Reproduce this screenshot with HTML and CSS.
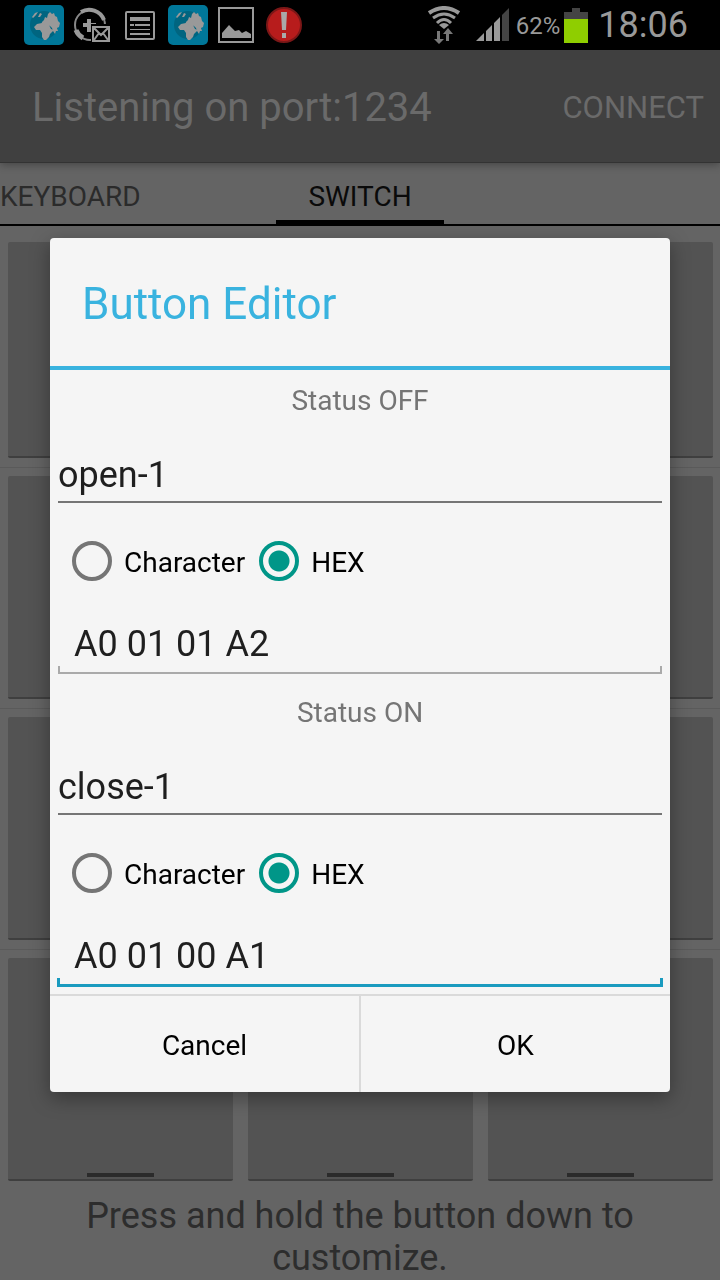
FILE: index.html
```
<!DOCTYPE html>
<html lang="en">
<head>
    <meta charset="UTF-8">
    <meta name="viewport" content="width=device-width, initial-scale=1">
    <title>Button Editor</title>
    <link rel="stylesheet" href="styles.css">
</head>
<body>
    <svg class="sprite" aria-hidden="true">
        <symbol id="globe" viewBox="0 0 40 40">
            <rect width="40" height="40" rx="5" fill="#007799"></rect>
            <circle cx="20" cy="20" r="14" fill="#006580"></circle>
            <path fill="#999" d="M8 12l3-4 3-1-2 3-3 3zM14 12l2-4 2 1-2 3z"></path>
            <path fill="#999" d="M18 17l2-2 1-3 2 1 1-4 2-2 2 2 2-1 1 3 2 1 1 4 2 2-1 4-2 1 1 3-2 0-1 3-2-3-1-3-2-2-3-1-2 1-2-1-2 1z"></path>
            <path fill="#999" d="M10 22l3-3 5-1 3 2 4 0 2 4 3 1-4 4-1 3-3 3-2 0-2-3 0-4-2-3-4 0z"></path>
        </symbol>
    </svg>

    <div class="status-bar">
        <div class="status-bar__icons">
            <svg width="40" height="40"><use href="#globe"></use></svg>
            <svg width="40" height="40" viewBox="0 0 40 40">
                <circle cx="18" cy="20" r="15" fill="none" stroke="#888" stroke-width="2"></circle>
                <path d="M4 25A15 15 0 0 0 11 33" fill="none" stroke="#999" stroke-width="5"></path>
                <path d="M9 7A16 16 0 0 1 32 15" fill="none" stroke="#999" stroke-width="4"></path>
                <path d="M17 14v13M11 20h13" stroke="#999" stroke-width="4"></path>
                <path d="M19 19h20v19H19z" fill="#000"></path>
                <path d="M21 22h16v14H21zM22 23l7 7 7-7M22 35l5-7M36 35l-5-7" fill="#000" stroke="#999" stroke-width="2"></path>
            </svg>
            <svg width="40" height="40" viewBox="0 0 40 40">
                <rect x="6" y="7" width="28" height="27" rx="1" fill="none" stroke="#999" stroke-width="2"></rect>
                <path d="M10 12h20v4H10zM10 19h4v2h-4zM15 19h15v2H15zM10 24h20v1H10zM10 28h20v2H10z" fill="#999"></path>
            </svg>
            <svg width="40" height="40"><use href="#globe"></use></svg>
            <svg width="40" height="40" viewBox="0 0 40 40">
                <path d="M3 3h34v34H3z" fill="none" stroke="#999" stroke-width="2"></path>
                <path d="M6 33v-5l7-8 6 6 4-1 3 3 4-2 5 3v4z" fill="#999"></path>
            </svg>
            <svg width="40" height="40" viewBox="0 0 40 40">
                <circle cx="20" cy="20" r="17" fill="#b71c1c" stroke="#7c1717" stroke-width="2"></circle>
                <path d="M17 7h6l-1 18h-4zM18 28h4v5h-4z" fill="#aaa"></path>
            </svg>
        </div>
        <div class="status-bar__info">
            <svg width="36" height="38" viewBox="0 0 36 38">
                <g fill="none" stroke="#999">
                    <path d="M3 7Q18-3 33 7" stroke-width="4"></path>
                    <path d="M7 12Q18 4 29 12" stroke-width="3"></path>
                    <path d="M11 17Q18 10 25 17" stroke-width="3"></path>
                </g>
                <path d="M13 19q5-4 10 0l-5 4z" fill="#999"></path>
                <path d="M11 25h3v8h4l-5 5-5-5h3zM20 35v-7h-3l5-6 5 6h-4v7z" fill="#777"></path>
            </svg>
            <svg class="signal" width="34" height="34" viewBox="0 0 34 34">
                <path d="M0 33l8-8v8zM10 23l6-6v16h-6zM18 15l6-6v24h-6z" fill="#999"></path>
                <path d="M26 7l7-7v33h-7z" fill="#444"></path>
            </svg>
            <span class="percent">62%</span>
            <svg width="24" height="36" viewBox="0 0 24 36">
                <path d="M0 5h8V1h8v4h8v8H0z" fill="#444"></path>
                <path d="M0 12h24v24H0z" fill="#8fce00"></path>
            </svg>
            <span class="clock">18:06</span>
        </div>
    </div>

    <header class="app-bar">
        <h1 class="app-bar__title">Listening on port:1234</h1>
        <button class="app-bar__action" type="button">CONNECT</button>
    </header>

    <nav class="tabs">
        <a class="tab" href="#keyboard">KEYBOARD</a>
        <a class="tab tab--active" href="#switch">SWITCH</a>
    </nav>

    <main class="switches">
        <div class="switch-row">
            <button class="switch" type="button"></button>
            <button class="switch" type="button"></button>
            <button class="switch" type="button"></button>
        </div>
        <div class="switch-row">
            <button class="switch" type="button"></button>
            <button class="switch" type="button"></button>
            <button class="switch" type="button"></button>
        </div>
        <div class="switch-row">
            <button class="switch" type="button"></button>
            <button class="switch" type="button"></button>
            <button class="switch" type="button"></button>
        </div>
        <div class="switch-row">
            <button class="switch" type="button"></button>
            <button class="switch" type="button"></button>
            <button class="switch" type="button"></button>
        </div>
        <p class="hint">Press and hold the button down to customize.</p>
    </main>

    <div class="overlay">
        <form class="dialog" role="dialog" aria-labelledby="dialog-title">
            <h2 class="dialog__title" id="dialog-title">Button Editor</h2>

            <div class="status">
                <label class="status__label" for="off-name">Status OFF</label>
                <input class="field" id="off-name" type="text" value="open-1">
                <div class="radios">
                    <label class="radio"><input type="radio" name="off-mode"><span>Character</span></label>
                    <label class="radio"><input type="radio" name="off-mode" checked><span>HEX</span></label>
                </div>
                <input class="field field--code" type="text" value="A0 01 01 A2" aria-label="Status OFF code">
            </div>

            <div class="status">
                <label class="status__label" for="on-name">Status ON</label>
                <input class="field" id="on-name" type="text" value="close-1">
                <div class="radios">
                    <label class="radio"><input type="radio" name="on-mode"><span>Character</span></label>
                    <label class="radio"><input type="radio" name="on-mode" checked><span>HEX</span></label>
                </div>
                <input class="field field--code field--current" type="text" value="A0 01 00 A1" aria-label="Status ON code">
            </div>

            <div class="dialog__buttons">
                <button class="dialog__button" type="button">Cancel</button>
                <button class="dialog__button" type="button">OK</button>
            </div>
        </form>
    </div>
</body>
</html>
```

FILE: styles.css
```
* {
    box-sizing: border-box;
}

body {
    margin: 0;
    background: #646464;
    font-family: Roboto, "Liberation Sans", sans-serif;
    font-size: 28px;
}

button,
input {
    font: inherit;
    border: 0;
    border-radius: 0;
    outline: 0;
}

.sprite {
    position: absolute;
    width: 0;
    height: 0;
}

/* status bar */
.status-bar {
    display: flex;
    justify-content: space-between;
    height: 50px;
    padding: 0 32px 0 24px;
    background: #000;
    color: #999;
}

.status-bar__icons,
.status-bar__info {
    display: flex;
    align-items: center;
}

.status-bar__icons {
    gap: 8px;
}

.signal {
    margin: 0 6px 0 14px;
}

.percent {
    margin-right: 4px;
    padding-top: 2px;
    font-size: 24px;
}

.clock {
    margin-left: 10px;
    font-size: 36px;
}

/* app bar */
.app-bar {
    position: relative;
    display: flex;
    align-items: center;
    justify-content: space-between;
    height: 113px;
    padding: 3px 16px 0 32px;
    background: #404040;
    border-bottom: 1px solid #333;
    box-shadow: 0 2px 8px rgba(0, 0, 0, 0.3);
    color: #6a6a6a;
}

.app-bar__title {
    margin: 0;
    font-size: 40px;
    font-weight: 400;
}

.app-bar__action {
    padding: 0;
    background: none;
    color: inherit;
    font-size: 31px;
}

/* tabs */
.tabs {
    display: grid;
    grid-template-columns: 1fr auto 1fr;
    height: 63px;
    border-bottom: 2px solid #000;
}

.tab {
    color: #2b2b2b;
    line-height: 68px;
    text-decoration: none;
}

.tab--active {
    height: 63px;
    padding: 0 32px;
    border-bottom: 6px solid #000;
    color: #0a0a0a;
}

/* switch buttons */
.switches {
    padding-top: 1px;
}

.switch-row {
    display: grid;
    grid-template-columns: repeat(3, 1fr);
    gap: 15px;
    height: 241px;
    padding: 8px 7px 9px 8px;
    border-bottom: 1px solid #5a5a5a;
}

.switch-row:first-child {
    padding-top: 15px;
}

.switch-row:nth-child(4) {
    height: 240px;
    border-bottom: 0;
}

.switch {
    display: flex;
    align-items: flex-end;
    justify-content: center;
    padding: 0 0 2px;
    border-bottom: 2px solid #3f3f3f;
    border-radius: 2px;
    background: #535353;
}

.switch:after {
    content: "";
    width: 30%;
    height: 4px;
    background: #2b2b2b;
}

.hint {
    margin: 0;
    padding: 5px 64px 0;
    color: #2d2d2d;
    font-size: 36px;
    line-height: 42px;
    text-align: center;
}

/* dialog */
.overlay {
    position: fixed;
    top: 50px;
    right: 0;
    bottom: 0;
    left: 0;
    display: flex;
    align-items: center;
    padding: 0 50px;
}

.dialog {
    flex: 1;
    border-radius: 4px;
    background: #f5f5f5;
    box-shadow: 0 6px 20px rgba(0, 0, 0, 0.35);
    overflow: hidden;
}

.dialog__title {
    margin: 0;
    padding: 4px 32px 0;
    border-bottom: 4px solid #39b3df;
    color: #39b3df;
    font-size: 44px;
    font-weight: 400;
    line-height: 124px;
}

.status {
    padding: 0 8px 8px;
}

.status__label {
    display: block;
    margin-bottom: 17px;
    padding-top: 2px;
    color: #757575;
    line-height: 58px;
    text-align: center;
}

.field {
    display: block;
    width: 100%;
    height: 56px;
    padding: 2px 0 0;
    border-bottom: 2px solid #757575;
    background: none;
    color: #1f1f1f;
    font-size: 36px;
}

/* underline with short ticks going up on both ends */
.field--code {
    --line: #aaa;
    height: 60px;
    padding: 2px 16px 0;
    border-bottom-color: var(--line);
    background:
        linear-gradient(var(--line), var(--line)) left bottom / 2px 6px no-repeat,
        linear-gradient(var(--line), var(--line)) right bottom / 2px 6px no-repeat;
}

/* thicker line, one pixel out on each side */
.field--current {
    --line: #1a9bbf;
    width: calc(100% + 2px);
    height: 61px;
    margin: 0 -1px -1px;
    padding: 2px 17px 0;
    border-bottom-width: 3px;
    background-size: 3px 6px;
}

.radios {
    display: flex;
    gap: 14px;
    padding: 38px 14px 33px;
}

.radio {
    display: flex;
    align-items: center;
    gap: 12px;
    height: 40px;
    color: #000;
}

.radio span {
    padding-top: 3px;
}

.radio input {
    appearance: none;
    width: 40px;
    height: 40px;
    margin: 0;
    border: 4px solid #757575;
    border-radius: 50%;
}

.radio input:checked {
    border-color: #009688;
    background: radial-gradient(circle, #009688 10px, transparent 11px);
}

.dialog__buttons {
    display: flex;
    border-top: 2px solid #dadada;
}

.dialog__button {
    flex: 1;
    height: 96px;
    padding: 2px 0 0;
    background: none;
    color: #000;
}

.dialog__button + .dialog__button {
    border-left: 2px solid #dadada;
}
```
